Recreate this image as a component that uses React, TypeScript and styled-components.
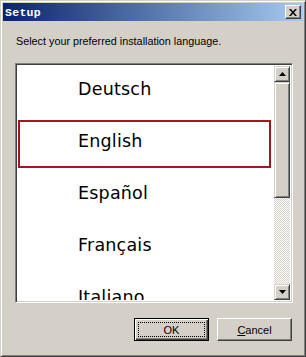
import { createGlobalStyle, styled } from 'styled-components';

const languages = ['Deutsch', 'English', 'Español', 'Français', 'Italiano'];

const GlobalStyle = createGlobalStyle`
	html, body {
		margin: 0;
		padding: 0;
		background: #d4d0c8;
	}
	* {
		box-sizing: border-box;
	}
`;

const Window = styled.div`
	width: 306px;
	height: 357px;
	background: #d4d0c8;
	border: 1px solid;
	border-color: #d4d0c8 #404040 #404040 #d4d0c8;
	box-shadow: inset 1px 1px 0 #fff, inset -1px -1px 0 #808080;
	padding: 2px;
	display: flex;
	flex-direction: column;
	font-family: 'Liberation Sans', Arial, sans-serif;
	font-size: 11px;
	color: #000;
`;

const TitleBar = styled.div`
	height: 18px;
	display: flex;
	align-items: center;
	justify-content: space-between;
	padding: 0 2px 0 2px;
	background: linear-gradient(to right, #0a246a, #a6caf0);
`;

const Title = styled.span`
	font-family: 'Liberation Mono', 'Courier New', monospace;
	font-weight: bold;
	font-size: 11.5px;
	color: #fff;
	letter-spacing: 0.3px;
`;

const CloseButton = styled.div`
	width: 16px;
	height: 14px;
	background: #d4d0c8;
	border: 1px solid;
	border-color: #fff #404040 #404040 #fff;
	box-shadow: inset -1px -1px 0 #808080;
	display: flex;
	align-items: center;
	justify-content: center;
`;

const Body = styled.div`
	flex: 1;
	display: flex;
	flex-direction: column;
	padding: 11px 10px 0 12px;
`;

const Prompt = styled.div`
	height: 18px;
	line-height: 18px;
	padding-left: 1px;
	font-size: 10.8px;
`;

const ListBox = styled.div`
	margin-top: 13px;
	width: 278px;
	height: 240px;
	display: flex;
	border: 1px solid;
	border-color: #808080 #fff #fff #808080;
	box-shadow: inset 1px 1px 0 #404040, inset -1px -1px 0 #d4d0c8;
	padding: 2px;
	background: #fff;
`;

const Items = styled.div`
	flex: 1;
	overflow: hidden;
	display: flex;
	flex-direction: column;
	gap: 4px;
	padding: 2px 3px 0 0;
`;

const Item = styled.div<{ $selected?: boolean }>`
	flex: none;
	height: 48px;
	display: flex;
	align-items: center;
	padding: 0 0 7px 58px;
	border: 2px solid ${(p) => (p.$selected ? '#a3151f' : 'transparent')};
	font-family: 'DejaVu Sans', Verdana, sans-serif;
	font-size: 17.5px;
	letter-spacing: 0.2px;
	color: #000;
`;

const ScrollBar = styled.div`
	width: 16px;
	display: flex;
	flex-direction: column;
	background-color: #d4d0c8;
	background-image: conic-gradient(#fff 25%, #d4d0c8 0 50%, #fff 0 75%, #d4d0c8 0);
	background-size: 2px 2px;
`;

const Raised = styled.div`
	background: #d4d0c8;
	border: 1px solid;
	border-color: #d4d0c8 #404040 #404040 #d4d0c8;
	box-shadow: inset 1px 1px 0 #fff, inset -1px -1px 0 #808080;
`;

const ArrowButton = styled(Raised)`
	height: 16px;
	flex: none;
	display: flex;
	align-items: center;
	justify-content: center;
`;

const Thumb = styled(Raised)`
	height: 116px;
	flex: none;
`;

const Track = styled.div`
	flex: 1;
`;

const ButtonRow = styled.div`
	display: flex;
	justify-content: flex-end;
	gap: 8px;
	margin-top: 15px;
	padding-right: 1px;
`;

const Button = styled.button<{ $default?: boolean }>`
	width: 75px;
	height: 23px;
	padding: 0;
	background: #d4d0c8;
	font-family: 'Liberation Sans', Arial, sans-serif;
	font-size: 11px;
	color: #000;
	position: relative;
	border: 1px solid;
	border-color: ${(p) => (p.$default ? '#000' : '#fff #404040 #404040 #fff')};
	box-shadow: ${(p) =>
		p.$default
			? 'inset 1px 1px 0 #fff, inset -1px -1px 0 #404040, inset -2px -2px 0 #808080'
			: 'inset -1px -1px 0 #808080'};
	display: flex;
	align-items: center;
	justify-content: center;
`;

const Focus = styled.span`
	position: absolute;
	inset: 3px;
	border: 1px dotted #000;
`;

const Arrow = ({ down }: { down?: boolean }) => (
	<svg width='7' height='4' viewBox='0 0 7 4'>
		<path d={down ? 'M0 0h7L3.5 4z' : 'M0 4h7L3.5 0z'} fill='#000' />
	</svg>
);

const App = () => {
	return (
		<>
			<GlobalStyle />
			<Window>
				<TitleBar>
					<Title>Setup</Title>
					<CloseButton>
						<svg width='8' height='7' viewBox='0 0 8 7'>
							<path d='M0 0h2l2 2.5L6 0h2L5 3.5 8 7H6L4 4.5 2 7H0l3-3.5z' fill='#000' />
						</svg>
					</CloseButton>
				</TitleBar>
				<Body>
					<Prompt>Select your preferred installation language.</Prompt>
					<ListBox>
						<Items>
							{languages.map((lang) => (
								<Item key={lang} $selected={lang === 'English'}>
									{lang}
								</Item>
							))}
						</Items>
						<ScrollBar>
							<ArrowButton>
								<Arrow />
							</ArrowButton>
							<Thumb />
							<Track />
							<ArrowButton>
								<Arrow down />
							</ArrowButton>
						</ScrollBar>
					</ListBox>
					<ButtonRow>
						<Button $default>
							<Focus />
							OK
						</Button>
						<Button>
							<span>
								<u>C</u>ancel
							</span>
						</Button>
					</ButtonRow>
				</Body>
			</Window>
		</>
	);
};

export default App;
